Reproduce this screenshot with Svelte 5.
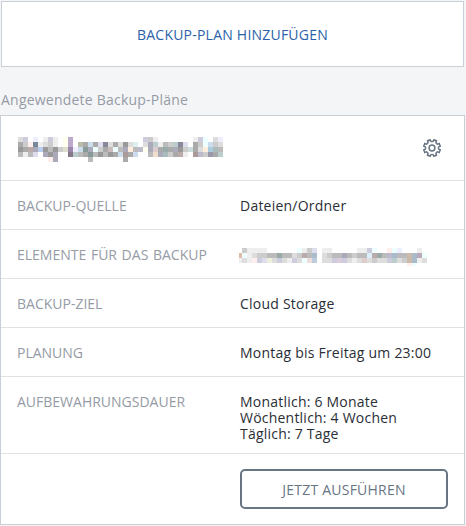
<script>
    const block = 5;

    // obscured values, one hex colour per block, '.' is an empty block
    const planName = [
        'ddd ccd . eef . eee ccd eee . ffe bac . . . . . . . . . . . . . . ccd ccc eee . . . . . . . eee ccd eff fff ddd eef',
        'aaa ccc fee 789 eee ddd ccc eee . ffe bac . bba aaa cde aaa dde 889 ddd aaa ddd 999 ddd dee . ddd aab bcc eee bbb ccc bcc 889 dde . aaa ccc eff cde ccc ddd',
        '999 aaa baa aab bce 999 bbb 999 ccc ddc 98a eef cde 899 aab eff ccc aaa cbb eff bbb aab fed bbb bbc ffe aab dcc aaa 9aa aaa aab 999 ccc cdd aaa ddd fed acd abb bbb',
        'bbb eee bbb dde . aab 999 aab . . 878 bcc bbb aaa 899 bbb 999 bbb 999 aaa cde a99 aaa cde . . bbb edc aab abb ccc aaa baa eee . a99 bbc ccc 99a aaa bcc',
        '. . . . . . fee aab . . . . . . bbb . . . . . . aaa'
    ];
    const sourcePath = [
        '. ccc eee eee eee eee . . . . . fff eff eee ccc dde . eee eee . . . . . eee eee ccd eff . . fee eff eef . . . eee',
        'dba eff eee ddd ccc ccc bbb bbb 9aa bbb bbb ddd ccc baa bbb abc . ddd ccc bbb bbb aab bbb ccc bbb bbb def baa 9aa bbb bbc abc bbb bbb cba abc bab eff',
        'eee ddd eee fee ccd dde eed ddd ccd ddd eee ccd ddd eff edd bcd . ddd ddd ccd dcd ccd ddd eee ddd dcc ddd ccc ddd ddd ccd bcc ddd ccc cba abc eee ddd',
        '. . . . . . . . . . . . . . . . . . . . . . . . . . . . . . . . . . fee eff'
    ];

    const blocks = rows => rows.flatMap((row, y) =>
        row.split(' ')
            .map((fill, x) => ({x: x * block, y: y * block, fill: '#' + fill}))
            .filter(b => b.fill !== '#.')
    );

    const details = [
        {label: 'Backup-Quelle', value: 'Dateien/Ordner'},
        {label: 'Elemente für das Backup', hidden: sourcePath},
        {label: 'Backup-Ziel', value: 'Cloud Storage'},
        {label: 'Planung', value: 'Montag bis Freitag um 23:00'},
        {label: 'Aufbewahrungsdauer', value: 'Monatlich: 6 Monate\nWöchentlich: 4 Wochen\nTäglich: 7 Tage'},
    ];
</script>

<style>
    :global(body) {
        background: #f4f5f7;
    }

    .panel {
        box-sizing: border-box;
        width: 465px;
        padding-top: 1px;
        font: 14px/16px "Open Sans", sans-serif;
        letter-spacing: 0.22px;
        color: #2a2e36;
    }

    button {
        box-sizing: border-box;
        padding: 0;
        font: inherit;
        letter-spacing: inherit;
        text-transform: uppercase;
        cursor: pointer;
    }

    .add {
        display: block;
        width: 463px;
        height: 66px;
        margin-left: 1px;
        padding-top: 2px;
        border: 1px solid #c8cfd7;
        background: #fff;
        color: #2b62a9;
        font-weight: 500;
    }

    h2 {
        margin: 25px 0 7px 1px;
        font-size: 14px;
        font-weight: 400;
        color: #959ba5;
    }

    .card {
        border: 1px solid #c8cfd7;
        background: #fff;
    }

    header {
        display: flex;
        justify-content: space-between;
        align-items: center;
        height: 64px;
        padding: 0 22px 0 17px;
        border-bottom: 1px solid #dfe1e4;
    }

    svg {
        display: block;
    }

    .name {
        margin-top: 3px;
    }

    .settings {
        border: none;
        background: none;
    }

    dl {
        margin: 0;
    }

    .row {
        display: grid;
        grid-template-columns: 223px 1fr;
        box-sizing: border-box;
        min-height: 49px;
        padding: 17px 16px 11px;
        border-bottom: 1px solid #dfe1e4;
    }

    dt {
        color: #959ba5;
        letter-spacing: 0;
        word-spacing: 1px;
        text-transform: uppercase;
    }

    dd {
        margin: 0;
        white-space: pre-line;
    }

    .path {
        margin: 1px 0 0 -1px;
    }

    footer {
        display: flex;
        justify-content: flex-end;
        padding: 15px 16px;
    }

    .run {
        width: 208px;
        height: 40px;
        padding-top: 2px;
        border: 2px solid #687684;
        border-radius: 5px;
        background: #fff;
        color: #687684;
        font-weight: 500;
    }
</style>

<div class="panel">
    <button class="add">Backup-Plan hinzufügen</button>

    <h2>Angewendete Backup-Pläne</h2>

    <section class="card">
        <header>
            <svg class="name" width="205" height="25" shape-rendering="crispEdges">
                {#each blocks(planName) as b}
                    <rect x={b.x} y={b.y} width={block} height={block} fill={b.fill} />
                {/each}
            </svg>
            <button class="settings" aria-label="Einstellungen">
                <svg width="20" height="20" viewBox="0 0 20 20" fill="none" stroke="#687684" stroke-width="1.5" stroke-linejoin="round">
                    <path d="M8.2 1.7 L8.6 3.2 Q10 4 11.4 3.2 L11.8 1.7 L14.6 2.8 L13.8 4.3 Q14.3 5.7 15.7 6.2 L17.2 5.4 L18.3 8.2 L16.8 8.6 Q16 10 16.8 11.4 L18.3 11.8 L17.2 14.6 L15.7 13.8 Q14.3 14.3 13.8 15.7 L14.6 17.2 L11.8 18.3 L11.4 16.8 Q10 16 8.6 16.8 L8.2 18.3 L5.4 17.2 L6.2 15.7 Q5.7 14.3 4.3 13.8 L2.8 14.6 L1.7 11.8 L3.2 11.4 Q4 10 3.2 8.6 L1.7 8.2 L2.8 5.4 L4.3 6.2 Q5.7 5.7 6.2 4.3 L5.4 2.8 Z" />
                    <circle cx="10" cy="10" r="2.9" />
                </svg>
            </button>
        </header>

        <dl>
            {#each details as detail}
                <div class="row">
                    <dt>{detail.label}</dt>
                    <dd>
                        {#if detail.hidden}
                            <svg class="path" width="188" height="18" viewBox="2 0 188 18" shape-rendering="crispEdges">
                                {#each blocks(detail.hidden) as b}
                                    <rect x={b.x} y={b.y} width={block} height={block} fill={b.fill} />
                                {/each}
                            </svg>
                        {:else}
                            {detail.value}
                        {/if}
                    </dd>
                </div>
            {/each}
        </dl>

        <footer>
            <button class="run">Jetzt ausführen</button>
        </footer>
    </section>
</div>
